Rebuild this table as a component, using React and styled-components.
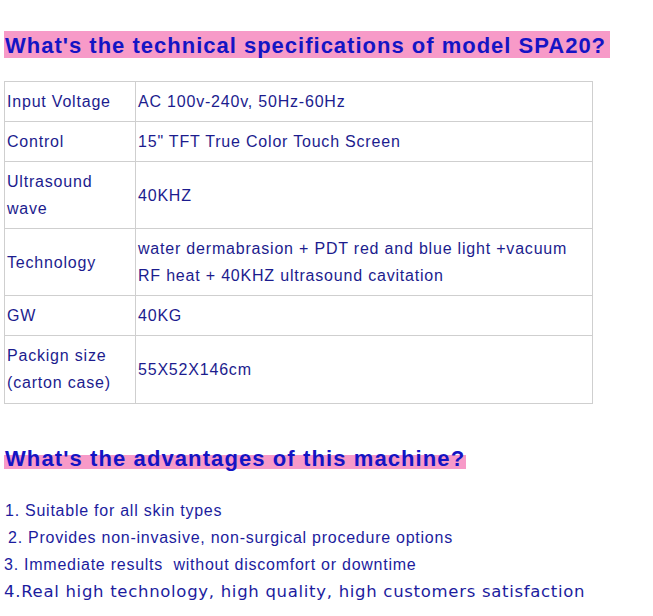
import React from "react";
import styled, { createGlobalStyle } from "styled-components";

const specs = [
  { label: ["Input Voltage"], value: ["AC 100v-240v, 50Hz-60Hz"] },
  { label: ["Control"], value: ['15" TFT True Color Touch Screen'] },
  { label: ["Ultrasound", "wave"], value: ["40KHZ"] },
  {
    label: ["Technology"],
    value: [
      "water dermabrasion + PDT red and blue light +vacuum",
      "RF heat + 40KHZ ultrasound cavitation",
    ],
  },
  { label: ["GW"], value: ["40KG"] },
  { label: ["Packign size", "(carton case)"], value: ["55X52X146cm"] },
];

const advantages = [
  { text: "1. Suitable for all skin types", indent: 1 },
  { text: "2. Provides non-invasive, non-surgical procedure options", indent: 4 },
  { text: "3. Immediate results  without discomfort or downtime", indent: 0 },
  { text: "4.Real high technology, high quality, high customers satisfaction", indent: 0, wide: true },
];

const App = () => {
  return (
    <Page>
      <GlobalStyle />
      <SpecTitle>What's the technical specifications of model SPA20?</SpecTitle>

      <SpecTable>
        <tbody>
          {specs.map((row, i) => (
            <tr key={i}>
              <LabelCell>
                {row.label.map((l, j) => (
                  <Line key={j}>{l}</Line>
                ))}
              </LabelCell>
              <ValueCell>
                {row.value.map((v, j) => (
                  <Line key={j}>{v}</Line>
                ))}
              </ValueCell>
            </tr>
          ))}
        </tbody>
      </SpecTable>

      <AdvTitle>
        <span>What's the advantages of this machine?</span>
      </AdvTitle>

      <AdvList>
        {advantages.map((a, i) => (
          <AdvItem key={i} $indent={a.indent} $wide={a.wide}>
            {a.text}
          </AdvItem>
        ))}
      </AdvList>
    </Page>
  );
};

export default App;

// Styled Components

const GlobalStyle = createGlobalStyle`
  body {
    margin: 0;
    background: #ffffff;
    font-family: "Liberation Sans", Arial, sans-serif;
  }
`;

const Page = styled.div`
  width: 653px;
  padding: 31px 0 0 4px;
  box-sizing: border-box;
`;

const SpecTitle = styled.h2`
  margin: 0;
  width: 606px;
  height: 27px;
  background: #f79ac8;
  color: #1414c4;
  font-size: 22px;
  font-weight: 700;
  letter-spacing: 1px;
  line-height: 29px;
  padding-left: 1px;
  box-sizing: border-box;
  white-space: nowrap;
  overflow: hidden;
`;

const SpecTable = styled.table`
  margin-top: 23px;
  width: 589px;
  border-collapse: collapse;
  color: #1c1c8e;
  font-size: 16px;
  letter-spacing: 0.8px;

  td {
    border: 1px solid #cfcfcf;
    padding: 6px 2px 6px 2px;
    vertical-align: middle;
  }

  tr:last-child td {
    padding-bottom: 7px;
  }
`;

const LabelCell = styled.td`
  width: 126px;
`;

const ValueCell = styled.td``;

const Line = styled.div`
  line-height: 27px;
  white-space: nowrap;
`;

const AdvTitle = styled.h2`
  margin: 43px 0 0 0;
  font-size: 22px;
  font-weight: 700;
  line-height: 24px;
  color: #1414c4;
  letter-spacing: 1.1px;
  white-space: nowrap;

  > span {
    padding: 0 1px 0 1px;
    background: linear-gradient(to bottom, transparent 9px, #f79ac8 9px, #f79ac8 23px, transparent 23px);
  }
`;

const AdvList = styled.div`
  margin-top: 26px;
  color: #1c1c9e;
`;

const AdvItem = styled.div`
  padding-left: ${(p) => p.$indent}px;
  height: 27px;
  line-height: 27px;
  white-space: pre;
  font-family: ${(p) => (p.$wide ? '"DejaVu Sans", Verdana, sans-serif' : '"Liberation Sans", Arial, sans-serif')};
  font-size: ${(p) => (p.$wide ? "16.5px" : "16px")};
  letter-spacing: ${(p) => (p.$wide ? "0.7px" : "0.75px")};
`;
